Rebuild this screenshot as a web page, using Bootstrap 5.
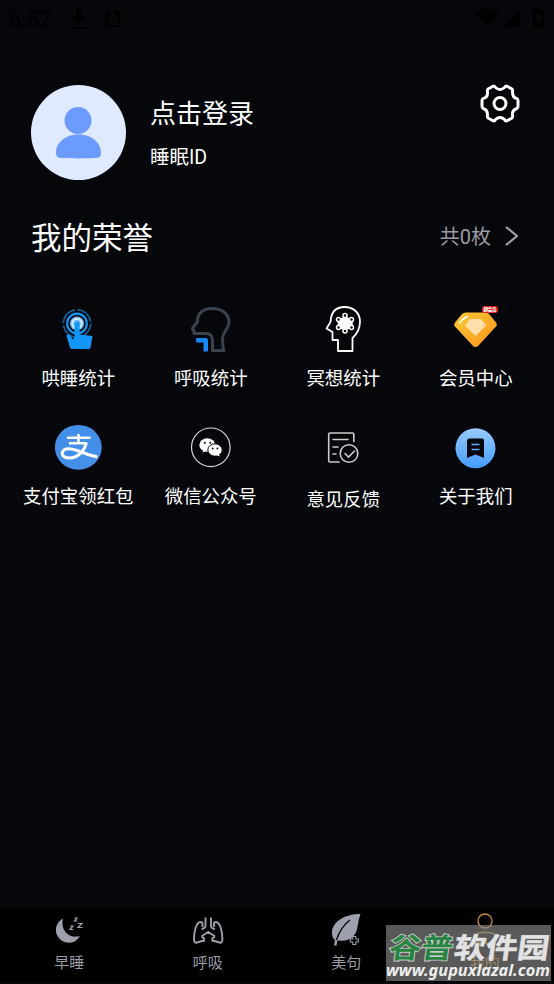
<!DOCTYPE html>
<html lang="zh-CN">
<head>
<meta charset="utf-8">
<meta name="viewport" content="width=device-width, initial-scale=1">
<title>我的</title>
<link href="https://cdn.jsdelivr.net/npm/bootstrap@5.3.0/dist/css/bootstrap.min.css" rel="stylesheet">
<style>
body{background:#05070b;color:#fff;font-family:"Noto Sans CJK SC",sans-serif;height:984px;overflow:hidden}
svg{display:block;flex:none}
.statusbar{height:39px;padding:0 5px 0 9px;color:#000;font:22px/39px Roboto,sans-serif}
.profile{padding:46px 34px 0 31px;height:150px}
.gear{margin-top:-1px}
.login-name{font-size:26px;line-height:38px;margin-top:8px}
.sleep-id{font-size:19.5px;line-height:28px;margin-top:11px}
.latin{font-family:Roboto,sans-serif}
.honor{height:94px;padding:0 36px 0 31px}
.honor h1{font-size:30.5px;line-height:40px;font-weight:400}
.honor-count{font-size:20px;line-height:30px;color:#9b9ba3}
.arrow{margin-left:14px}
.menu{padding:0 12px}
.entry{height:118px;padding-top:20px;font-size:18.4px;line-height:26px;white-space:nowrap}
.entry svg{margin-bottom:5px}
.entry.lower svg{margin-bottom:8px}
.tabs{height:73px;background:#000;color:#9b9da8;font-size:15px;line-height:22px}
.tabs .current{color:#c58b35}
.stamp{right:0;bottom:0}
.stamp svg{overflow:visible}
</style>
<script src="https://cdn.jsdelivr.net/npm/bootstrap@5.3.0/dist/js/bootstrap.bundle.min.js"></script>
</head>
<body class="d-flex flex-column">
<header class="statusbar d-flex align-items-center justify-content-between flex-shrink-0">
  <div class="d-flex align-items-center"><span>6:52</span>
    <svg width="75" height="39" viewBox="52 0 75 39"><path d="M77 8h5v8h5l-7.500 7.500-7.500-7.500h5zM72 27h16v2H72z" fill="#000"/><path d="M106 11h15v16h-15z" fill="#000"/><path d="M109.500 23l4-9 4 9m-7-3h6m-2 4h5" stroke="#0b0d12" fill="none" stroke-width="1.500"/></svg>
  </div>
  <svg width="75" height="39" viewBox="474 0 75 39"><path d="M475 13q12-9 24 0l-12 14zM503 27L520 10v17zM533 10h3V8h5v2h3v17h-11z" fill="#000"/><path d="M539 13l-4 6h3v5l4-7h-3z" fill="#08090d"/></svg>
</header>

<section class="profile d-flex align-items-start flex-shrink-0">
  <svg width="95" height="95" viewBox="0 0 95 95"><circle cx="47.500" cy="47.500" r="47.500" fill="#dfe9ff"/><circle cx="47" cy="35.500" r="13.500" fill="#6b9bff"/><path d="M25 68c0-11 10-18.500 22.500-18.500S70 57 70 68c0 4-2 5-7 5-9 .5-22 .5-31 0-5 0-7-1-7-5z" fill="#6b9bff"/></svg>
  <div class="ms-4 flex-grow-1"><div class="login-name">点击登录</div><div class="sleep-id">睡眠<span class="latin">ID</span></div></div>
  <svg class="gear" width="40" height="40" viewBox="480 84 40 40" fill="none" stroke="#fff" stroke-width="3" stroke-linejoin="round"><path d="M493.500 86Q495 86 495.500 87.500Q500 91.500 504.500 87.500Q505 86 506.500 86L512 89Q513 90 512.500 92Q512.500 98 517 98.500Q518 99 518 101V106Q518 108 517 108.500Q512 110 512.500 115Q513 117 512 118L506.500 121Q505 121 504.500 119.500Q500 115.500 495.500 119.500Q495 121 493.500 121L488 118Q487 117 487.500 115Q487.500 109.500 483 108.500Q482 108 482 106V101Q482 99 483 98.500Q488 97.500 487.500 92Q487 90 488 89Z"/><circle cx="500" cy="103.500" r="6"/></svg>
</section>

<section class="honor d-flex align-items-center justify-content-between flex-shrink-0">
  <h1 class="m-0">我的荣誉</h1>
  <div class="honor-count d-flex align-items-center"><span>共<span class="latin">0</span>枚</span><svg class="arrow" width="13" height="20" viewBox="0 0 13 20"><path d="M1 1l11 9-11 9" fill="none" stroke="#a3a3a8" stroke-width="2"/></svg></div>
</section>

<main class="menu flex-grow-1">
 <div class="row row-cols-4 g-0 text-center">
  <div class="col entry d-flex flex-column align-items-center">
   <svg width="50" height="56" viewBox="53 303 50 56" fill="none"><circle cx="77" cy="323.500" r="13.700" stroke="#12649f" stroke-width="1.500" stroke-dasharray="19 2.500"/><circle cx="77" cy="323.500" r="9.800" stroke="#1294f6" stroke-width="2.200"/><circle cx="77" cy="323.500" r="7" fill="#78bcf7"/><circle cx="77" cy="323.500" r="4.700" stroke="#d4eeff" stroke-width="1.800"/><path d="M74.500 324a2.600 2.600 0 0 1 5.200 0v10.500L92.500 336l-2 11.500q-.5 1.500-2 1.500H72q-1.500 0-2-1.500L66.500 336q0-1.500 1.500-1.500 3 0 4.500 5l2-2z" fill="#1296f8"/></svg><span>哄睡统计</span></div>
  <div class="col entry d-flex flex-column align-items-center">
   <svg width="50" height="56" viewBox="186 303 50 56" fill="none"><path d="M194 333.500V330.500Q191.500 329.500 193 327.500L197.500 321.500C197 313.500 203 308.500 212 308.500C222 308.500 229 314 229 322C229 329 222.500 332 222.500 339Q222.500 345 223.700 350.500H212.500V341Q212.500 333.500 206 333.500Z" stroke="#39424d" stroke-width="3"/><path d="M197 338h9q2 0 2 2v11.500h-4.500v-9H197q-1 0-1-1v-2.500q0-1 1-1z" fill="#1788fb"/></svg><span>呼吸统计</span></div>
  <div class="col entry d-flex flex-column align-items-center">
   <svg width="50" height="56" viewBox="318 303 50 56" fill="none" stroke="#fff"><path d="M338 351V340H332.500V332L326.500 328.500L330.500 322C331 312 336 307 344.500 307C354 307 360 313.500 360 321.500C360 329 357 334 352.500 338V351Z" stroke-width="1.800" stroke-linejoin="round"/><path d="M337.500 319l5 0 2.500-3 3 3h5l-1.500 4.500 1.500 4.500h-5l-3 3-3-3h-5l2-4.500z" fill="#fff" stroke-width="2" stroke-linejoin="round"/><g fill="#05070b" stroke-width="1.500"><circle cx="345" cy="315.500" r="2"/><circle cx="338.500" cy="319.500" r="2"/><circle cx="351.500" cy="319.500" r="2"/><circle cx="338.500" cy="327.500" r="2"/><circle cx="351.500" cy="327.500" r="2"/><circle cx="345" cy="331" r="2"/></g></svg><span>冥想统计</span></div>
  <div class="col entry d-flex flex-column align-items-center">
   <svg width="50" height="56" viewBox="451 303 50 56"><defs><linearGradient id="gold" x2="1" y2="1"><stop stop-color="#ffca35"/><stop offset="1" stop-color="#fa941c"/></linearGradient></defs><path d="M465.500 312.500h20q2 0 3.500 1.500l7 8.500q1.500 2 0 4l-18 19.500q-2.500 2-5 0l-18-19.500q-1.500-2 0-4l7-8.500q1.500-1.500 3.500-1.500z" fill="url(#gold)"/><path d="M470 319h11l5 6.500-10.500 10.500-10.500-10.500z" fill="#ffe0ac"/><path d="M462 320l5-3.500m-7 6 .8-.7" stroke="#fff" stroke-width="2" stroke-linecap="round"/><rect x="482" y="306" width="16" height="7" rx="3" fill="#ef1717"/><text x="483.500" y="311.300" font-size="4.500" font-weight="900" textLength="13" fill="#fff">超会员</text></svg><span>会员中心</span></div>
  <div class="col entry d-flex flex-column align-items-center">
   <svg width="50" height="56" viewBox="53 421 50 56"><ellipse cx="78.300" cy="447.300" rx="23.400" ry="22.400" fill="#438fe9"/><path d="M67 437.700h23.500M78.500 434v9M69 443.200h18" fill="none" stroke="#fff" stroke-width="2.500"/><path d="M86.500 443c-2 7-8 15-17 15-6 0-8-3-7-6 2-5 10-3.500 16-1 7 3 12 4.500 19 6" fill="none" stroke="#fff" stroke-width="3"/></svg><span>支付宝领红包</span></div>
  <div class="col entry d-flex flex-column align-items-center">
   <svg width="50" height="56" viewBox="186 421 50 56"><circle cx="210.800" cy="447.300" r="19.300" fill="none" stroke="#d5d7d9" stroke-width="1.200"/><path d="M204 450l-2 2.500 5-1.500z" fill="#fff"/><ellipse cx="207.300" cy="445" rx="8" ry="6.700" fill="#fff"/><ellipse cx="215" cy="450" rx="7.200" ry="6.200" fill="#fff" stroke="#05070b" stroke-width="1"/><path d="M216 455l4 1.500-1.500-3z" fill="#fff"/><g fill="#05070b"><circle cx="204.800" cy="442.800" r="1"/><circle cx="210.300" cy="442.800" r="1"/><circle cx="212.700" cy="448.500" r=".9"/><circle cx="217.400" cy="448.500" r=".9"/></g></svg><span>微信公众号</span></div>
  <div class="col entry lower d-flex flex-column align-items-center">
   <svg width="50" height="56" viewBox="318 421 50 56" fill="none" stroke="#ccc" stroke-width="1.600" stroke-linecap="round"><path d="M339 462h-9q-1.300 0-1.300-1.300v-26.400q0-1.300 1.300-1.300h22.500q1.300 0 1.300 1.300V441.500M333 439.500h15M333 447h5M333 454h3"/><circle cx="349" cy="453.500" r="8.800"/><path d="M345 453.500l3.500 3.500 6-6"/></svg><span>意见反馈</span></div>
  <div class="col entry d-flex flex-column align-items-center">
   <svg width="50" height="56" viewBox="451 421 50 56"><defs><linearGradient id="sky" x2="0" y2="1"><stop stop-color="#9acbff"/><stop offset="1" stop-color="#429dff"/></linearGradient></defs><circle cx="475.500" cy="448.200" r="20" fill="url(#sky)"/><path d="M469.500 438.500H482q2 0 2 2V458l-8.500-3.500L467 458V441q0-2.500 2.500-2.500z" fill="#05070b"/><path d="M471.500 444.500h8m-8 5h8" stroke="#63afff" stroke-width="1.700"/></svg><span>关于我们</span></div>
 </div>
</main>

<nav class="tabs row row-cols-4 g-0 text-center flex-shrink-0 mb-0">
 <div class="col d-flex flex-column align-items-center"><svg width="40" height="42" viewBox="49 909 40 42"><path d="M63 918.500A12.800 12.800 0 1 0 80 936C69 939 60 930 63 918.500z" fill="#9da0ac"/><path d="M70 926h3l-3 3.500h3.200M74.500 918h2.500l-2.500 3h2.700M78 923.500h4l-4 4h4.500" fill="none" stroke="#9da0ac" stroke-width="1.200"/></svg><span>早睡</span></div>
 <div class="col d-flex flex-column align-items-center"><svg width="40" height="42" viewBox="187.500 909 40 42" fill="none" stroke="#9da0ac" stroke-width="1.900" stroke-linejoin="round"><path d="M205 917.500v8q0 3-4 3.500M210.500 917.500v8q0 3 4 3.500M202 927V924q0-2-2-2c-4 0-6.500 9-6.500 17q0 4.500 3 3.500l5-1.500h2v-3q-2 0-2-2l6.200-4 6.200 4q0 2-2 2v3h2l5 1.500q3 1 3-3.500c0-8-2.500-17-6.500-17q-2 0-2 2v3"/></svg><span>呼吸</span></div>
 <div class="col d-flex flex-column align-items-center"><svg width="40" height="42" viewBox="326 909 40 42"><path d="M360.500 914C344 914 332 922 332 933q0 5 3 7l-1 5.500h2.500l1-5c14 2 19-6 20-14q1-7 3-12.500z" fill="#9da0ac"/><path d="M336.500 940q4-13 13.500-20" fill="none" stroke="#000" stroke-width="1.300"/><path d="M352.800 936.500h3v2.500h2.500v3h-2.500v2.500h-3V942h-2.500v-3h2.500z" fill="#000" stroke="#9da0ac" stroke-width="1.100"/></svg><span>美句</span></div>
 <div class="col current d-flex flex-column align-items-center"><svg width="40" height="42" viewBox="464.500 909 40 42" fill="none" stroke="#c58b35" stroke-width="1.300"><circle cx="484.500" cy="921" r="7"/><path d="M476 943q-2.500 0-2.500-3 0-7.500 8-7.500h6q8 0 8 7.500 0 3-2.500 3z"/></svg><span>我的</span></div>
</nav>
<div class="flex-shrink-0"><svg width="1" height="2"></svg></div>

<aside class="stamp position-absolute"><svg width="168" height="59" viewBox="386 925 168 59"><rect x="386" y="925" width="165" height="56" fill="#888" fill-opacity=".65"/><g font-weight="700" font-size="32" transform="translate(386 957.500) skewX(-8) scale(1 .88)"><text x="2" y="0" textLength="64" lengthAdjust="spacingAndGlyphs" fill="#278540" stroke="#ccc" stroke-width="2" paint-order="stroke">谷普</text><text x="67" y="0" textLength="95" lengthAdjust="spacingAndGlyphs" fill="#e2e2e2" stroke="#e2e2e2" stroke-width=".6">软件园</text></g><text x="386" y="976" textLength="164" lengthAdjust="spacingAndGlyphs" font-family="Noto Sans,sans-serif" font-size="15.500" font-weight="700" font-style="italic" fill="#eee">www.gupuxlazal.com</text></svg></aside>
</body>
</html>
